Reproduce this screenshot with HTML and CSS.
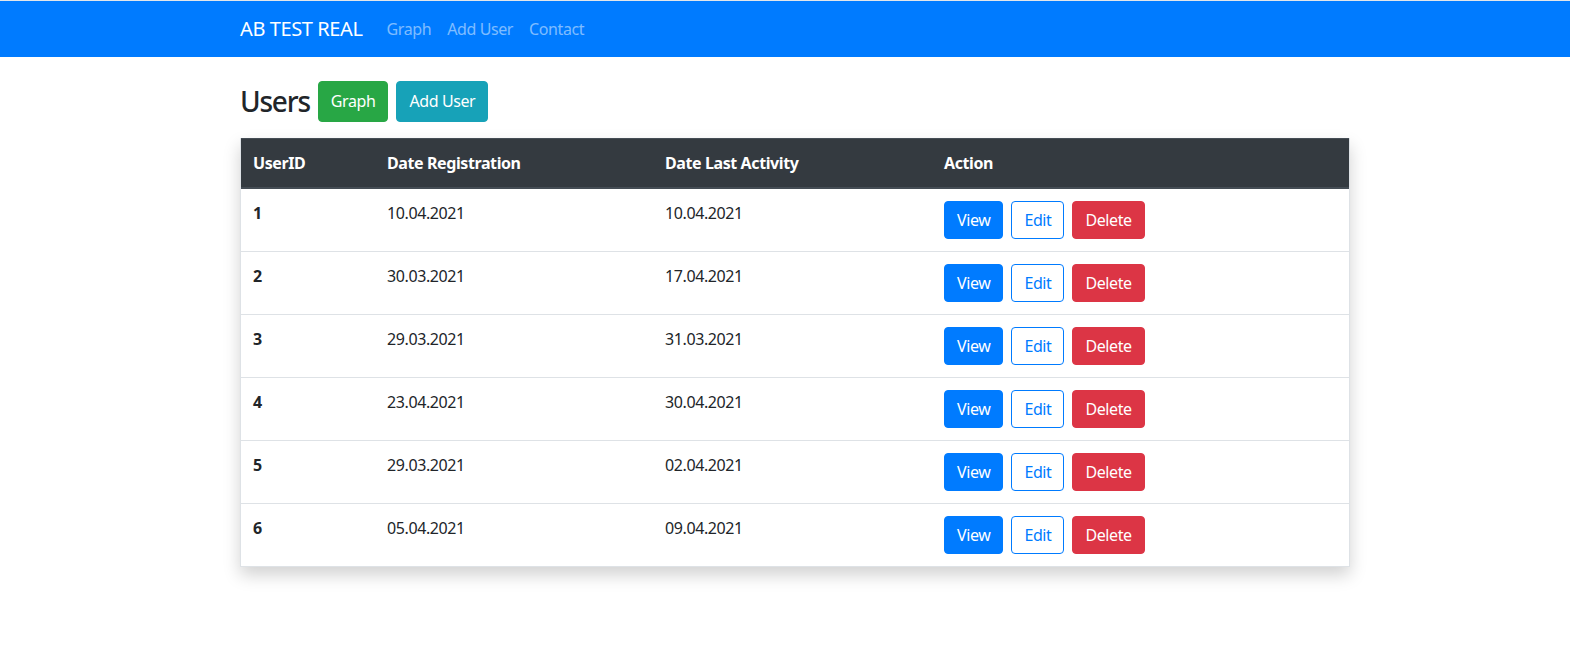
FILE: index.html
```html
<!DOCTYPE html>
<html lang="en">
<head>
<meta charset="utf-8">
<title>Users</title>
<link rel="stylesheet" href="styles.css">
</head>
<body>
<nav class="navbar">
  <div class="container nav-inner">
    <a class="brand" href="#">AB TEST REAL</a>
    <a class="nav-link" href="#">Graph</a>
    <a class="nav-link" href="#">Add User</a>
    <a class="nav-link" href="#">Contact</a>
  </div>
</nav>
<main class="container main">
  <div class="title-row">
    <h2 class="title">Users</h2>
    <a class="btn btn-success" href="#">Graph</a>
    <a class="btn btn-info" href="#">Add User</a>
  </div>
  <div class="table-card">
  <table class="users">
    <thead>
      <tr><th class="c1">UserID</th><th class="c2">Date Registration</th><th class="c3">Date Last Activity</th><th>Action</th></tr>
    </thead>
    <tbody>
      <tr><th>1</th><td>10.04.2021</td><td>10.04.2021</td><td><div class="actions"><a class="btn sm btn-primary" href="#">View</a><a class="btn sm btn-outline" href="#">Edit</a><a class="btn sm btn-danger" href="#">Delete</a></div></td></tr>
      <tr><th>2</th><td>30.03.2021</td><td>17.04.2021</td><td><div class="actions"><a class="btn sm btn-primary" href="#">View</a><a class="btn sm btn-outline" href="#">Edit</a><a class="btn sm btn-danger" href="#">Delete</a></div></td></tr>
      <tr><th>3</th><td>29.03.2021</td><td>31.03.2021</td><td><div class="actions"><a class="btn sm btn-primary" href="#">View</a><a class="btn sm btn-outline" href="#">Edit</a><a class="btn sm btn-danger" href="#">Delete</a></div></td></tr>
      <tr><th>4</th><td>23.04.2021</td><td>30.04.2021</td><td><div class="actions"><a class="btn sm btn-primary" href="#">View</a><a class="btn sm btn-outline" href="#">Edit</a><a class="btn sm btn-danger" href="#">Delete</a></div></td></tr>
      <tr><th>5</th><td>29.03.2021</td><td>02.04.2021</td><td><div class="actions"><a class="btn sm btn-primary" href="#">View</a><a class="btn sm btn-outline" href="#">Edit</a><a class="btn sm btn-danger" href="#">Delete</a></div></td></tr>
      <tr><th>6</th><td>05.04.2021</td><td>09.04.2021</td><td><div class="actions"><a class="btn sm btn-primary" href="#">View</a><a class="btn sm btn-outline" href="#">Edit</a><a class="btn sm btn-danger" href="#">Delete</a></div></td></tr>
    </tbody>
  </table>
  </div>
</main>
</body>
</html>
```
FILE: styles.css
```css
* { box-sizing: border-box; }
html, body { margin: 0; padding: 0; }
body {
  font-family: "Noto Sans", "Open Sans", sans-serif;
  font-size: 16px;
  line-height: 24px;
  letter-spacing: -0.4px;
  color: #212529;
  background: #fff;
}
a { text-decoration: none; }
.container {
  width: 1110px;
  margin: 0 auto;
  position: relative;
  left: 10px;
}
.navbar {
  background: #007bff;
  border-top: 1px solid #e2e6ea;
  height: 57px;
}
.nav-inner {
  display: flex;
  align-items: center;
  height: 56px;
}
.brand {
  color: #fff;
  font-size: 20px;
  line-height: 30px;
  margin-right: 16px;
}
.nav-link {
  color: rgba(255,255,255,.5);
  padding: 0 8px;
  font-size: 16px;
}
.nav-link:first-of-type { padding-left: 7px; }
.main { padding-top: 24px; padding-bottom: 40px; }
.title-row {
  display: flex;
  align-items: center;
  gap: 8px;
  margin-bottom: 16px;
}
.title {
  margin: 0;
  font-size: 28px;
  font-weight: 500;
  line-height: 41px;
  letter-spacing: -1.2px;
}
.btn {
  display: inline-block;
  color: #fff;
  font-size: 16px;
  line-height: 24px;
  padding: 7px 12px 8px;
  border-radius: 4px;
  border: 1px solid transparent;
}
.btn-success { background: #28a745; border-color: #28a745; }
.btn-info { background: #17a2b8; border-color: #17a2b8; }
.btn.sm { padding: 6px 12px; }
.btn-primary { background: #007bff; border-color: #007bff; }
.btn-outline { color: #007bff; border-color: #007bff; background: #fff; }
.btn-danger { background: #dc3545; border-color: #dc3545; }
.table-card {
  box-shadow: 0 8px 16px rgba(0,0,0,.18);
  border: 1px solid #dee2e6;
  border-top: 0;
  background: #fff;
}
.users {
  width: 100%;
  border-collapse: collapse;
}
.users th, .users td {
  text-align: left;
  vertical-align: top;
  padding: 12px;
  border-top: 1px solid #dee2e6;
}
.users thead th {
  background: #343a40;
  color: #fff;
  border-top: 1px solid #454d55;
  border-bottom: 2px solid #454d55;
  font-weight: 700;
}
.users tbody th { font-weight: 700; }
.users tbody tr:first-child th, .users tbody tr:first-child td { border-top: 0; }
.c1 { width: 134px; }
.c2 { width: 278px; }
.c3 { width: 279px; }
.actions { display: flex; gap: 8px; }
```
